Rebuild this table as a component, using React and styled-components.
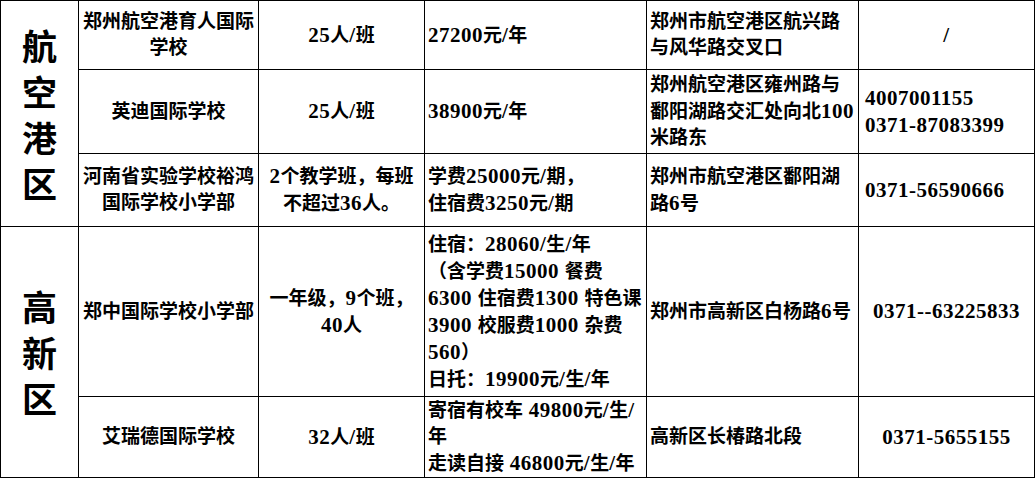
import React from 'react'
import styled, { createGlobalStyle } from 'styled-components'

const GlobalStyle = createGlobalStyle`
  html, body {
    margin: 0;
    padding: 0;
    background: #fff;
  }
`

const Table = styled.table`
  border-collapse: collapse;
  table-layout: fixed;
  width: 1034px;
  font-family: "Liberation Serif", "Noto Sans CJK SC", serif;
  font-weight: 700;
  color: #000;
`

const Col = styled.col`
  width: ${p => p.$w}px;
`

const Row = styled.tr`
  height: ${p => p.$h}px;
`

const Cell = styled.td`
  border: 1px solid #000;
  padding: 0 ${p => p.$pad || 0}px;
  text-align: ${p => p.$align || 'center'};
  vertical-align: middle;
  font-size: 19px;
  line-height: 26px;
  white-space: nowrap;
  overflow: visible;
`

const RegionCell = styled.td`
  border: 1px solid #000;
  padding: 0;
  text-align: center;
  vertical-align: middle;
`

const RegionChar = styled.span`
  display: block;
  font-family: "Noto Sans CJK SC", sans-serif;
  font-size: 35px;
  line-height: 46px;
  font-weight: 700;
`

const Line = styled.span`
  display: block;
`

const Num = styled.span`
  font-family: "Liberation Serif", serif;
  font-size: 21px;
  letter-spacing: 0.5px;
`

// ascii runs (digits, slashes) get the serif face a bit larger
const mix = (str) =>
  str.split(/([\x20-\x7E]+)/).map((part, i) =>
    /^[\x20-\x7E]+$/.test(part) ? <Num key={i}>{part}</Num> : part
  )

const Lines = ({ lines }) => lines.map((l, i) => <Line key={i}>{mix(l)}</Line>)

const regions = [
  {
    name: '航空港区',
    schools: [
      { h: 69, name: ['郑州航空港育人国际', '学校'], size: ['25人/班'], fee: ['27200元/年'], addr: ['郑州市航空港区航兴路', '与风华路交叉口'], tel: ['/'], telAlign: 'center' },
      { h: 84, name: ['英迪国际学校'], size: ['25人/班'], fee: ['38900元/年'], addr: ['郑州航空港区雍州路与', '鄱阳湖路交汇处向北100', '米路东'], tel: ['4007001155', '0371-87083399'], telAlign: 'left' },
      { h: 73, name: ['河南省实验学校裕鸿', '国际学校小学部'], size: ['2个教学班，每班', '不超过36人。'], fee: ['学费25000元/期，', '住宿费3250元/期'], addr: ['郑州市航空港区鄱阳湖', '路6号'], tel: ['0371-56590666'], telAlign: 'left' },
    ],
  },
  {
    name: '高新区',
    schools: [
      { h: 170, name: ['郑中国际学校小学部'], size: ['一年级，9个班，', '40人'], fee: ['住宿：28060/生/年', '（含学费15000 餐费', '6300 住宿费1300 特色课', '3900 校服费1000 杂费', '560）', '日托：19900元/生/年'], addr: ['郑州市高新区白杨路6号'], tel: ['0371--63225833'], telAlign: 'center' },
      { h: 81, name: ['艾瑞德国际学校'], size: ['32人/班'], fee: ['寄宿有校车 49800元/生/', '年', '走读自接 46800元/生/年'], addr: ['高新区长椿路北段'], tel: ['0371-5655155'], telAlign: 'center' },
    ],
  },
]

export default function App() {
  return (
    <>
      <GlobalStyle />
      <Table>
        <colgroup>
          {[78, 180, 166, 222, 212, 176].map((w, i) => <Col key={i} $w={w} />)}
        </colgroup>
        <tbody>
          {regions.map(region =>
            region.schools.map((s, i) => (
              <Row key={region.name + i} $h={s.h}>
                {i === 0 && (
                  <RegionCell rowSpan={region.schools.length}>
                    {region.name.split('').map(c => <RegionChar key={c}>{c}</RegionChar>)}
                  </RegionCell>
                )}
                <Cell><Lines lines={s.name} /></Cell>
                <Cell><Lines lines={s.size} /></Cell>
                <Cell $align="left" $pad={3}><Lines lines={s.fee} /></Cell>
                <Cell $align="left" $pad={3}><Lines lines={s.addr} /></Cell>
                <Cell $align={s.telAlign} $pad={s.telAlign === 'left' ? 6 : 0}><Lines lines={s.tel} /></Cell>
              </Row>
            ))
          )}
        </tbody>
      </Table>
    </>
  )
}
